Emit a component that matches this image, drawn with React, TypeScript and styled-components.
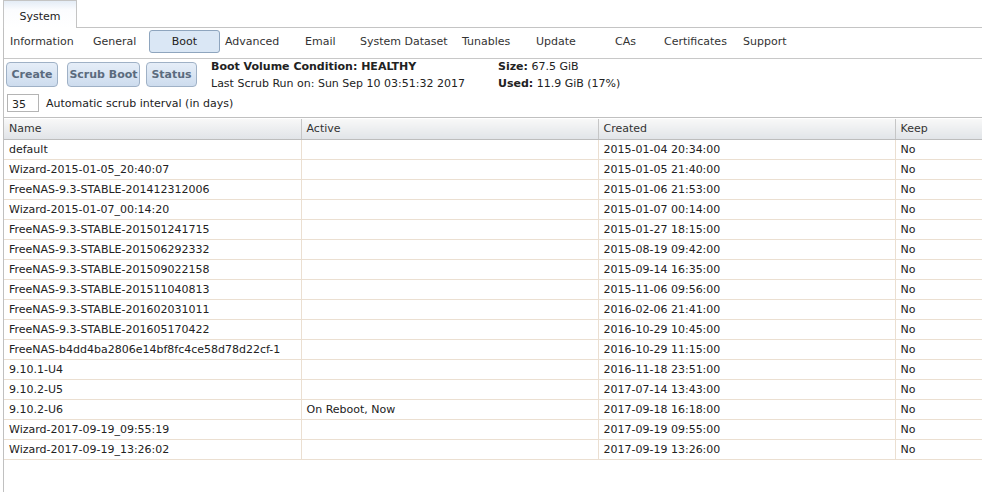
import React from "react";
import styled, { createGlobalStyle } from "styled-components";

const Global = createGlobalStyle`
  html, body { margin: 0; padding: 0; background: #fff; }
  body {
    font-family: "DejaVu Sans", Verdana, sans-serif;
    font-size: 11px;
    color: #222;
    overflow: hidden;
  }
`;

const Page = styled.div`
  width: 982px;
  height: 492px;
  overflow: hidden;
  display: flex;
  flex-direction: column;
`;

const TabBar = styled.div`
  display: flex;
  height: 28px;
  padding-left: 3px;
  flex: none;
`;

const Tab = styled.div`
  width: 74px;
  box-sizing: border-box;
  border: 1px solid #c4c4c4;
  border-bottom: none;
  background: linear-gradient(#e4ecf6 0px, #fbfcfe 9px, #fff 100%);
  display: flex;
  align-items: center;
  justify-content: center;
  padding-top: 4px;
  color: #222;
`;

const TabFill = styled.div`
  flex: 1;
  border-bottom: 1px solid #c4c4c4;
`;

const Panel = styled.div`
  margin-left: 3px;
  border-left: 1px solid #c0c0c0;
  flex: 1;
  display: flex;
  flex-direction: column;
  min-height: 0;
`;

const SubNav = styled.div`
  display: flex;
  align-items: center;
  height: 29px;
  padding-left: 6px;
  padding-bottom: 2px;
  box-sizing: content-box;
  margin-top: -1px;
  border-bottom: 1px solid #c8c8c8;
  flex: none;
`;

const SubItem = styled.div<{ $w: number; $active?: boolean }>`
  width: ${(p) => p.$w}px;
  flex: none;
  box-sizing: border-box;
  color: #333;
  white-space: nowrap;
  ${(p) =>
    p.$active
      ? `
    height: 23px;
    margin-right: 5px;
    display: flex;
    align-items: center;
    justify-content: center;
    background: #dae7f5;
    border: 1px solid #8ea5be;
    border-radius: 3px;
    color: #222;
  `
      : ""}
`;

const Toolbar = styled.div`
  padding: 3px 0 5px 2px;
  border-bottom: 1px solid #c0c0c0;
  flex: none;
`;

const ButtonRow = styled.div`
  display: flex;
  align-items: flex-start;
  height: 25px;
`;

const Btn = styled.button<{ $w: number; $ml: number }>`
  width: ${(p) => p.$w}px;
  margin-left: ${(p) => p.$ml}px;
  height: 25px;
  box-sizing: border-box;
  border: 1px solid #9fb1c6;
  border-radius: 4px;
  background: linear-gradient(#e6eef8, #cddcee);
  font-family: inherit;
  font-size: 11px;
  font-weight: bold;
  color: #5b6b7e;
  padding: 0;
  flex: none;
`;

const Info = styled.div`
  display: grid;
  grid-template-columns: 287px auto;
  row-gap: 2px;
  margin-left: 14px;
  margin-top: -3px;
  line-height: 15px;
`;

const Strong = styled.b`
  color: #222;
`;

const IntervalRow = styled.div`
  display: flex;
  align-items: center;
  margin-top: 7px;
  margin-left: 1px;
`;

const NumInput = styled.input`
  width: 32px;
  height: 18px;
  box-sizing: border-box;
  border: 1px solid #b4b4b4;
  font-family: inherit;
  font-size: 11px;
  color: #222;
  padding: 2px 0 0 4px;
  margin: 0 7px 0 0;
`;

const Table = styled.table`
  border-collapse: collapse;
  table-layout: fixed;
  width: 1188px;
  flex: none;
  margin-top: 1px;
`;

const Th = styled.th`
  height: 20px;
  padding: 0 0 0 5px;
  text-align: left;
  font-weight: normal;
  color: #333;
  background: linear-gradient(#f8f8f8, #e1e4e8);
  border-right: 1px solid #c6c6c6;
  border-bottom: 1px solid #bdbdbd;
  box-sizing: border-box;
`;

const Td = styled.td`
  height: 20px;
  padding: 0 0 0 5px;
  border-right: 1px solid #ebdfd1;
  border-bottom: 1px solid #ebdfd1;
  white-space: nowrap;
  color: #222;
  box-sizing: border-box;
`;

const Col = styled.col<{ $w: number }>`
  width: ${(p) => p.$w}px;
`;

const rows: [string, string, string, string][] = [
  ["default", "", "2015-01-04 20:34:00", "No"],
  ["Wizard-2015-01-05_20:40:07", "", "2015-01-05 21:40:00", "No"],
  ["FreeNAS-9.3-STABLE-201412312006", "", "2015-01-06 21:53:00", "No"],
  ["Wizard-2015-01-07_00:14:20", "", "2015-01-07 00:14:00", "No"],
  ["FreeNAS-9.3-STABLE-201501241715", "", "2015-01-27 18:15:00", "No"],
  ["FreeNAS-9.3-STABLE-201506292332", "", "2015-08-19 09:42:00", "No"],
  ["FreeNAS-9.3-STABLE-201509022158", "", "2015-09-14 16:35:00", "No"],
  ["FreeNAS-9.3-STABLE-201511040813", "", "2015-11-06 09:56:00", "No"],
  ["FreeNAS-9.3-STABLE-201602031011", "", "2016-02-06 21:41:00", "No"],
  ["FreeNAS-9.3-STABLE-201605170422", "", "2016-10-29 10:45:00", "No"],
  ["FreeNAS-b4dd4ba2806e14bf8fc4ce58d78d22cf-1", "", "2016-10-29 11:15:00", "No"],
  ["9.10.1-U4", "", "2016-11-18 23:51:00", "No"],
  ["9.10.2-U5", "", "2017-07-14 13:43:00", "No"],
  ["9.10.2-U6", "On Reboot, Now", "2017-09-18 16:18:00", "No"],
  ["Wizard-2017-09-19_09:55:19", "", "2017-09-19 09:55:00", "No"],
  ["Wizard-2017-09-19_13:26:02", "", "2017-09-19 13:26:00", "No"],
];

const subTabs: { label: string; w: number; active?: boolean }[] = [
  { label: "Information", w: 83 },
  { label: "General", w: 56 },
  { label: "Boot", w: 71, active: true },
  { label: "Advanced", w: 80 },
  { label: "Email", w: 55 },
  { label: "System Dataset", w: 102 },
  { label: "Tunables", w: 74 },
  { label: "Update", w: 79 },
  { label: "CAs", w: 49 },
  { label: "Certificates", w: 79 },
  { label: "Support", w: 60 },
];

export default function App() {
  return (
    <Page>
      <Global />
      <TabBar>
        <Tab>System</Tab>
        <TabFill />
      </TabBar>
      <Panel>
        <SubNav>
          {subTabs.map((t) => (
            <SubItem key={t.label} $w={t.w} $active={t.active}>
              {t.label}
            </SubItem>
          ))}
        </SubNav>
        <Toolbar>
          <ButtonRow>
            <Btn $w={52} $ml={0}>Create</Btn>
            <Btn $w={73} $ml={9}>Scrub Boot</Btn>
            <Btn $w={51} $ml={6}>Status</Btn>
            <Info>
              <div>
                <Strong>Boot Volume Condition: HEALTHY</Strong>
              </div>
              <div>
                <Strong>Size:</Strong> 67.5 GiB
              </div>
              <div>Last Scrub Run on: Sun Sep 10 03:51:32 2017</div>
              <div>
                <Strong>Used:</Strong> 11.9 GiB (17%)
              </div>
            </Info>
          </ButtonRow>
          <IntervalRow>
            <NumInput defaultValue="35" />
            <span>Automatic scrub interval (in days)</span>
          </IntervalRow>
        </Toolbar>
        <Table>
          <colgroup>
            <Col $w={297} />
            <Col $w={297} />
            <Col $w={297} />
            <Col $w={297} />
          </colgroup>
          <thead>
            <tr>
              <Th>Name</Th>
              <Th>Active</Th>
              <Th>Created</Th>
              <Th>Keep</Th>
            </tr>
          </thead>
          <tbody>
            {rows.map((r) => (
              <tr key={r[0]}>
                <Td>{r[0]}</Td>
                <Td>{r[1]}</Td>
                <Td>{r[2]}</Td>
                <Td>{r[3]}</Td>
              </tr>
            ))}
          </tbody>
        </Table>
      </Panel>
    </Page>
  );
}
